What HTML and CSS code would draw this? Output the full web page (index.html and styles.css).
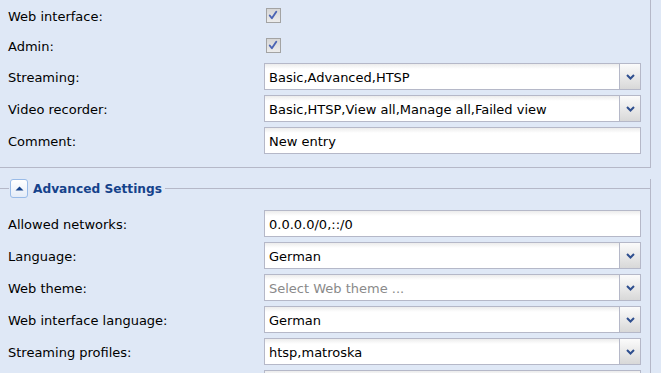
FILE: index.html
```html
<!DOCTYPE html>
<html>
<head>
<meta charset="utf-8">
<link rel="stylesheet" href="styles.css">
</head>
<body>
<div class="fs fs-top">
  <div class="row cb">
    <div class="lbl">Web interface:</div>
    <div class="check"><svg width="15" height="15" viewBox="0 0 15 15"><path class="ck" d="M4 7.5 L6.3 10.5 L11 3.5"/></svg></div>
  </div>
  <div class="row cb">
    <div class="lbl">Admin:</div>
    <div class="check"><svg width="15" height="15" viewBox="0 0 15 15"><path class="ck" d="M4 7.5 L6.3 10.5 L11 3.5"/></svg></div>
  </div>
  <div class="row">
    <div class="lbl">Streaming:</div>
    <div class="field combo"><span class="val">Basic,Advanced,HTSP</span><span class="trigger"><svg width="9" height="6" viewBox="0 0 9 6"><path d="M1 1 L4.5 4.5 L8 1"/></svg></span></div>
  </div>
  <div class="row">
    <div class="lbl">Video recorder:</div>
    <div class="field combo"><span class="val">Basic,HTSP,View all,Manage all,Failed view</span><span class="trigger"><svg width="9" height="6" viewBox="0 0 9 6"><path d="M1 1 L4.5 4.5 L8 1"/></svg></span></div>
  </div>
  <div class="row">
    <div class="lbl">Comment:</div>
    <div class="field"><span class="val">New entry</span></div>
  </div>
</div>

<div class="fs fs-adv">
  <div class="legend">
    <span class="lline lline-a"></span>
    <span class="tool"><svg width="9" height="5" viewBox="0 0 9 5"><path d="M0.5 4.5 L4.5 0.5 L8.5 4.5 Z"/></svg></span>
    <span class="ltext">Advanced Settings</span>
    <span class="lline lline-b"></span>
  </div>
  <div class="rows">
    <div class="row">
      <div class="lbl">Allowed networks:</div>
      <div class="field"><span class="val">0.0.0.0/0,::/0</span></div>
    </div>
    <div class="row">
      <div class="lbl">Language:</div>
      <div class="field combo"><span class="val">German</span><span class="trigger"><svg width="9" height="6" viewBox="0 0 9 6"><path d="M1 1 L4.5 4.5 L8 1"/></svg></span></div>
    </div>
    <div class="row">
      <div class="lbl">Web theme:</div>
      <div class="field combo"><span class="val ph">Select Web theme ...</span><span class="trigger"><svg width="9" height="6" viewBox="0 0 9 6"><path d="M1 1 L4.5 4.5 L8 1"/></svg></span></div>
    </div>
    <div class="row">
      <div class="lbl">Web interface language:</div>
      <div class="field combo"><span class="val">German</span><span class="trigger"><svg width="9" height="6" viewBox="0 0 9 6"><path d="M1 1 L4.5 4.5 L8 1"/></svg></span></div>
    </div>
    <div class="row">
      <div class="lbl">Streaming profiles:</div>
      <div class="field combo"><span class="val">htsp,matroska</span><span class="trigger"><svg width="9" height="6" viewBox="0 0 9 6"><path d="M1 1 L4.5 4.5 L8 1"/></svg></span></div>
    </div>
    <div class="row">
      <div class="lbl">&nbsp;</div>
      <div class="field"><span class="val"></span></div>
    </div>
  </div>
</div>
</body>
</html>
```

FILE: styles.css
```css
* {
  box-sizing: border-box;
}

html, body {
  margin: 0;
  padding: 0;
  width: 661px;
  height: 373px;
  overflow: hidden;
  background: #dfe8f6;
}

body {
  font-family: "DejaVu Sans", sans-serif;
  font-size: 13px;
  color: #000;
}

.fs {
  width: 653px;
  margin-left: -2px;
  border: 1px solid #b5b8c8;
  padding: 0 9px 0 9px;
}

.fs-top {
  margin-top: -5px;
  padding-top: 7px;
  padding-bottom: 13px;
  display: flex;
  flex-direction: column;
  gap: 5px;
}

.fs-adv {
  margin-top: 21px;
  border-top: none;
  padding-top: 0;
}

.rows {
  display: flex;
  flex-direction: column;
  gap: 5px;
  padding-top: 12px;
}

.row {
  display: flex;
  align-items: center;
  height: 27px;
  flex: none;
}

.row.cb {
  height: 25px;
}

.lbl {
  width: 256px;
  flex: none;
  white-space: nowrap;
  padding-top: 1px;
}

.check {
  width: 15px;
  height: 15px;
  margin-left: 2px;
  border: 1px solid #a3a3a3;
  background: linear-gradient(#d6d6d6, #ececec);
  display: flex;
}

.check svg {
  display: block;
  margin: -1px 0 0 -1px;
}

.ck {
  fill: none;
  stroke: #4b64b4;
  stroke-width: 2;
  stroke-linecap: round;
  stroke-linejoin: round;
}

.field {
  flex: 1;
  height: 27px;
  border: 1px solid #b5b8c8;
  background: linear-gradient(#ececec, #ffffff 5px);
  display: flex;
  align-items: center;
  padding-left: 4px;
  padding-top: 1px;
  white-space: nowrap;
  overflow: hidden;
}

.val {
  flex: 1;
}

.ph {
  color: #8a8a8a;
}

.trigger {
  flex: none;
  width: 21px;
  height: calc(100% + 1px);
  margin-top: -1px;
  border-left: 1px solid #b5b8c8;
  background: linear-gradient(#fbfbfb, #e6e6e6 60%, #d8d8d8);
  display: flex;
  align-items: center;
  justify-content: center;
}

.trigger path {
  fill: none;
  stroke: #2f4f8f;
  stroke-width: 2;
}

.legend {
  display: flex;
  align-items: center;
  height: 19px;
  margin-top: -10px;
  margin-left: -10px;
  margin-right: -10px;
}

.lline {
  height: 1px;
  background: #b5b8c8;
}

.lline-a {
  width: 11px;
  margin-right: 1px;
}

.lline-b {
  flex: 1;
  margin-left: 3px;
}

.tool {
  width: 18px;
  height: 19px;
  border: 1px solid #99bbe8;
  border-radius: 3px;
  background: linear-gradient(#ffffff, #e4ecf8);
  display: flex;
  align-items: center;
  justify-content: center;
}

.tool path {
  fill: #15428b;
}

.ltext {
  margin-left: 5px;
  font-weight: bold;
  color: #15428b;
  font-size: 12.2px;
}
```
